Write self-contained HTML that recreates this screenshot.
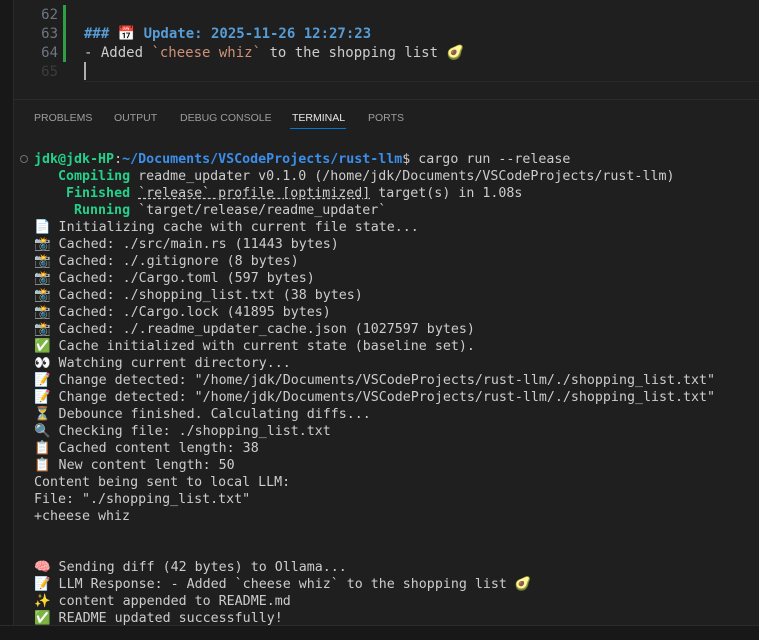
<!DOCTYPE html>
<html><head><meta charset="utf-8"><style>
body{margin:0;width:759px;height:639px;background:#1f1f1f;overflow:hidden;position:relative;font-family:"DejaVu Sans Mono","Liberation Mono",monospace}
.strip{position:absolute;left:0;top:0;width:13px;height:639px;background:#181818;border-right:1px solid #2b2b2b}
.ed{position:absolute;font-size:14px;white-space:pre;line-height:19px}
.ln{position:absolute;left:30px;width:28px;text-align:right;color:#6e7681;font-size:14px;line-height:19px}
.gut{position:absolute;left:63px;top:5px;width:3px;height:57px;background:#2ea043}
.sep{position:absolute;left:14px;right:0;top:99px;height:1px;background:#2b2b2b}
.tab{position:absolute;top:112px;font-family:"Liberation Sans",sans-serif;font-size:10.5px;color:#9d9d9d}
.term{position:absolute;left:34px;top:151px;font-size:13.3px;line-height:17px;white-space:pre;color:#cccccc}
.g{color:#23d18b;font-weight:bold}.b{color:#3b8eea;font-weight:bold}
.u{text-decoration:underline dashed}
.bot{position:absolute;left:0;right:0;top:625px;height:14px;background:#181818;border-top:1px solid #2b2b2b}
</style></head><body>
<div class="strip"></div>
<div class="gut"></div>
<div class="ln" style="top:6px">62</div>
<div class="ln" style="top:25px">63</div>
<div class="ln" style="top:44px">64</div>
<div class="ln" style="top:63px;color:#3c3c3c">65</div>
<div class="ed" style="left:84px;top:25px;color:#569cd6;font-weight:bold">### 📅 Update: 2025-11-26 12:27:23</div>
<div class="ed" style="left:84px;top:44px;color:#cccccc">- Added <span style="color:#ce9178">`cheese whiz`</span> to the shopping list 🥑</div>
<div style="position:absolute;left:84px;top:62px;width:2px;height:18px;background:#aeafad"></div>
<div style="position:absolute;left:84px;right:0;top:81px;height:1px;background:#282828"></div>
<div class="sep"></div>
<div class="tab" style="left:34px">PROBLEMS</div>
<div class="tab" style="left:114px">OUTPUT</div>
<div class="tab" style="left:180px">DEBUG CONSOLE</div>
<div class="tab" style="left:292px;color:#e7e7e7">TERMINAL</div>
<div style="position:absolute;left:290px;top:128px;width:56px;height:1px;background:#0078d4"></div>
<div class="tab" style="left:368px">PORTS</div>
<div style="position:absolute;left:20px;top:155px;width:6px;height:6px;border:1px solid #6e6e6e;border-radius:50%"></div>
<div class="term"><span class="g">jdk@jdk-HP</span>:<span class="b">~/Documents/VSCodeProjects/rust-llm</span>$ cargo run --release
   <span class="g">Compiling</span> readme_updater v0.1.0 (/home/jdk/Documents/VSCodeProjects/rust-llm)
    <span class="g">Finished</span> <span class="u">`release` profile [optimized]</span> target(s) in 1.08s
     <span class="g">Running</span> `target/release/readme_updater`
📄 Initializing cache with current file state...
📸 Cached: ./src/main.rs (11443 bytes)
📸 Cached: ./.gitignore (8 bytes)
📸 Cached: ./Cargo.toml (597 bytes)
📸 Cached: ./shopping_list.txt (38 bytes)
📸 Cached: ./Cargo.lock (41895 bytes)
📸 Cached: ./.readme_updater_cache.json (1027597 bytes)
✅ Cache initialized with current state (baseline set).
👀 Watching current directory...
📝 Change detected: "/home/jdk/Documents/VSCodeProjects/rust-llm/./shopping_list.txt"
📝 Change detected: "/home/jdk/Documents/VSCodeProjects/rust-llm/./shopping_list.txt"
⏳ Debounce finished. Calculating diffs...
🔍 Checking file: ./shopping_list.txt
📋 Cached content length: 38
📋 New content length: 50
Content being sent to local LLM:
File: "./shopping_list.txt"
+cheese whiz


🧠 Sending diff (42 bytes) to Ollama...
📝 LLM Response: - Added `cheese whiz` to the shopping list 🥑
✨ content appended to README.md
✅ README updated successfully!</div>
<div class="bot"></div>
</body></html>
